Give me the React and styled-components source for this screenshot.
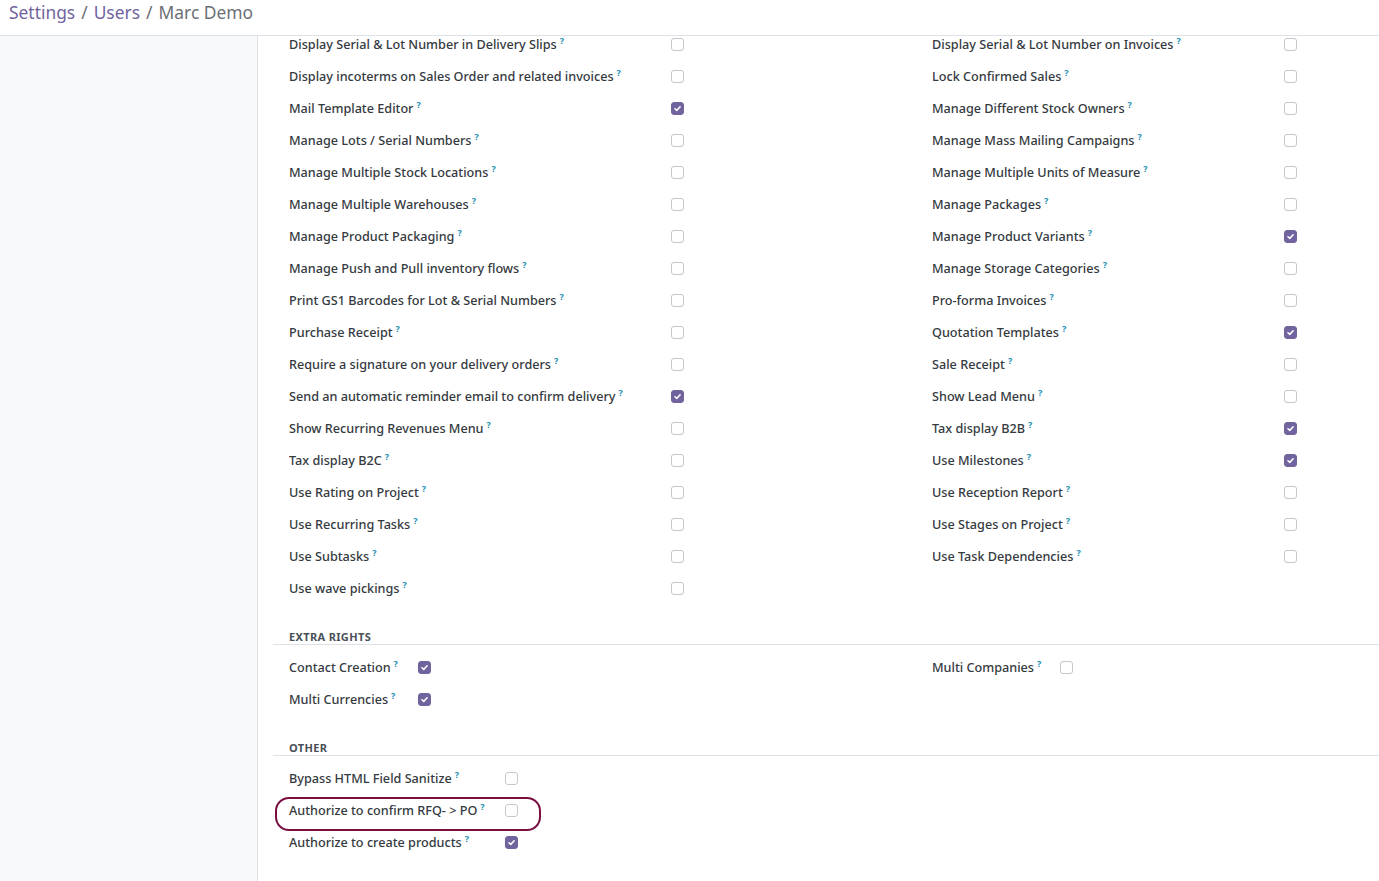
import React from "react";
import styled, { createGlobalStyle } from "styled-components";

const GlobalStyle = createGlobalStyle`
  html, body { margin: 0; padding: 0; background: #fff; }
  body { font-family: "Noto Sans", "Open Sans", sans-serif; color: #374151; }
  * { box-sizing: border-box; }
`;

const Page = styled.div`
  display: flex;
  flex-direction: column;
  height: 100vh;
  overflow: hidden;
`;

const Header = styled.header`
  height: 36px;
  flex: none;
  border-bottom: 1px solid #dee2e6;
  padding: 0 9px;
  display: flex;
  align-items: flex-start;
`;

const Crumbs = styled.ol`
  margin: 0;
  padding: 0;
  list-style: none;
  display: flex;
  font-size: 17.4px;
  line-height: 24px;
`;

const Crumb = styled.li`
  color: ${(p) => (p.$active ? "#6b6f76" : "#71639e")};
  &:not(:last-child)::after {
    content: "/";
    color: #6b6f76;
    padding: 0 6px;
  }
`;

const Body = styled.div`
  flex: 1;
  display: flex;
  min-height: 0;
`;

const Sidebar = styled.aside`
  width: 258px;
  flex: none;
  background: #f8f9fa;
  border-right: 1px solid #dee2e6;
`;

const Content = styled.main`
  flex: 1;
  padding-left: 15px;
`;

const Inner = styled.div`
  margin-top: -8px;
`;

const TwoCols = styled.div`
  display: grid;
  grid-template-columns: 643px 1fr;
`;

const Col = styled.div`
  display: flex;
  flex-direction: column;
`;

const Row = styled.div`
  position: relative;
  height: 32px;
  padding-left: 16px;
  display: grid;
  grid-template-columns: ${(p) => p.$labelW}px auto;
  align-items: center;
  ${(p) =>
    p.$highlight &&
    `
    &::after {
      content: "";
      position: absolute;
      left: 2px;
      top: 3px;
      width: 262px;
      height: 30px;
      border: 2px solid #7a0f42;
      border-radius: 14px;
      pointer-events: none;
    }
  `}
`;

const Label = styled.label`
  font-size: 12.65px;
  font-weight: 500;
  line-height: 16px;
  white-space: nowrap;
  color: #343a40;
`;

const Help = styled.sup`
  color: #1a8fb3;
  font-size: 9px;
  font-weight: 700;
  margin-left: 3px;
  vertical-align: 5px;
  line-height: 0;
`;

const Box = styled.span`
  width: 13px;
  height: 13px;
  border-radius: 3px;
  display: inline-flex;
  align-items: center;
  justify-content: center;
  border: 1px solid ${(p) => (p.$checked ? "#71639e" : "#c4c7cc")};
  background: ${(p) => (p.$checked ? "#71639e" : "#fff")};
`;

const SectionTitle = styled.div`
  margin-top: 25px;
  margin-bottom: 6px;
  padding: 0 0 0 16px;
  border-bottom: 1px solid #dee2e6;
  font-size: 11px;
  line-height: 15px;
  font-weight: 700;
  letter-spacing: 0.35px;
  text-transform: uppercase;
  color: #495057;
`;

const Checkbox = ({ checked }) => (
  <Box $checked={checked}>
    {checked && (
      <svg width="9" height="9" viewBox="0 0 10 10">
        <path d="M2.2 5.2 L4.2 7.1 L7.9 3.1" fill="none" stroke="#fff" strokeWidth="1.7" strokeLinecap="round" strokeLinejoin="round" />
      </svg>
    )}
  </Box>
);

const Field = ({ label, checked, labelW, highlight }) => (
  <Row $labelW={labelW} $highlight={highlight}>
    <Label>
      {label}
      <Help>?</Help>
    </Label>
    <Checkbox checked={checked} />
  </Row>
);

const left = [
  ["Display Serial & Lot Number in Delivery Slips", false],
  ["Display incoterms on Sales Order and related invoices", false],
  ["Mail Template Editor", true],
  ["Manage Lots / Serial Numbers", false],
  ["Manage Multiple Stock Locations", false],
  ["Manage Multiple Warehouses", false],
  ["Manage Product Packaging", false],
  ["Manage Push and Pull inventory flows", false],
  ["Print GS1 Barcodes for Lot & Serial Numbers", false],
  ["Purchase Receipt", false],
  ["Require a signature on your delivery orders", false],
  ["Send an automatic reminder email to confirm delivery", true],
  ["Show Recurring Revenues Menu", false],
  ["Tax display B2C", false],
  ["Use Rating on Project", false],
  ["Use Recurring Tasks", false],
  ["Use Subtasks", false],
  ["Use wave pickings", false],
];

const right = [
  ["Display Serial & Lot Number on Invoices", false],
  ["Lock Confirmed Sales", false],
  ["Manage Different Stock Owners", false],
  ["Manage Mass Mailing Campaigns", false],
  ["Manage Multiple Units of Measure", false],
  ["Manage Packages", false],
  ["Manage Product Variants", true],
  ["Manage Storage Categories", false],
  ["Pro-forma Invoices", false],
  ["Quotation Templates", true],
  ["Sale Receipt", false],
  ["Show Lead Menu", false],
  ["Tax display B2B", true],
  ["Use Milestones", true],
  ["Use Reception Report", false],
  ["Use Stages on Project", false],
  ["Use Task Dependencies", false],
];

export default function App() {
  return (
    <Page>
      <GlobalStyle />
      <Header>
        <Crumbs>
          <Crumb>Settings</Crumb>
          <Crumb>Users</Crumb>
          <Crumb $active>Marc Demo</Crumb>
        </Crumbs>
      </Header>
      <Body>
        <Sidebar />
        <Content>
          <Inner>
            <TwoCols>
              <Col>
                {left.map(([l, c]) => (
                  <Field key={l} label={l} checked={c} labelW={382} />
                ))}
              </Col>
              <Col>
                {right.map(([l, c]) => (
                  <Field key={l} label={l} checked={c} labelW={352} />
                ))}
              </Col>
            </TwoCols>

            <SectionTitle>Extra Rights</SectionTitle>
            <TwoCols>
              <Col>
                <Field label="Contact Creation" checked labelW={129} />
                <Field label="Multi Currencies" checked labelW={129} />
              </Col>
              <Col>
                <Field label="Multi Companies" checked={false} labelW={128} />
              </Col>
            </TwoCols>

            <SectionTitle>Other</SectionTitle>
            <Col>
              <Field label="Bypass HTML Field Sanitize" checked={false} labelW={216} />
              <Field label="Authorize to confirm RFQ- > PO" checked={false} labelW={216} highlight />
              <Field label="Authorize to create products" checked labelW={216} />
            </Col>
          </Inner>
        </Content>
      </Body>
    </Page>
  );
}
